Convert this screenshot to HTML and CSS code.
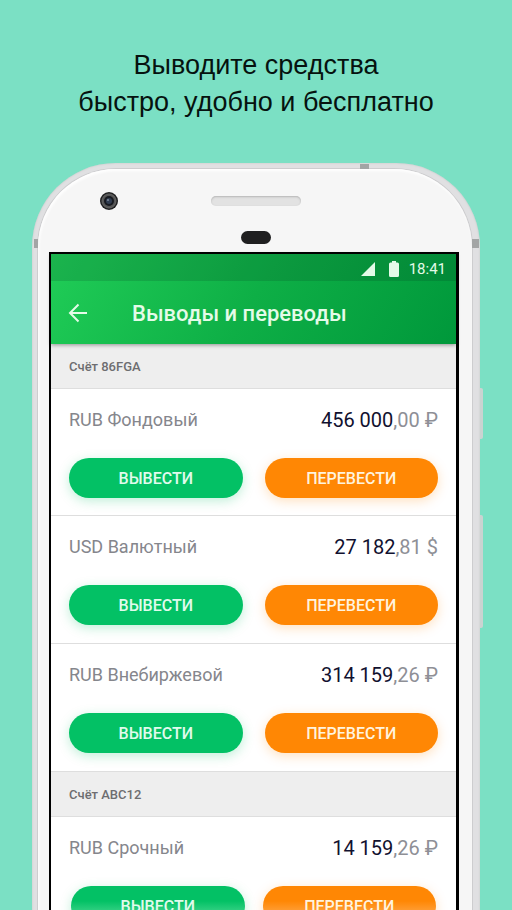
FILE: index.html
```
<!DOCTYPE html>
<html lang="ru">
<head>
	<meta charset="UTF-8">
	<meta name="viewport" content="width=device-width, initial-scale=1">
	<title>Выводы и переводы</title>
	<link rel="stylesheet" href="styles.css">
</head>
<body>
	<div class="page">
		<h1 class="slogan">Выводите средства<br>быстро, удобно и бесплатно</h1>
		<div class="phone">
			<span class="band band-top"></span>
			<span class="band band-left"></span>
			<span class="band band-right"></span>
			<span class="key key-power"></span>
			<span class="key key-volume"></span>
			<div class="front">
				<div class="hardware">
					<svg class="camera" width="20" height="20" viewBox="0 0 20 20" aria-hidden="true">
						<circle cx="10" cy="10" r="9" fill="#202122"/>
						<circle cx="10" cy="10" r="7" fill="#555" stroke="#666" stroke-width="1"/>
						<circle cx="10" cy="10" r="5" fill="#171a20"/>
						<circle cx="10" cy="10" r="3" fill="#303c50"/>
						<circle cx="9" cy="9" r="1" fill="#7d899a"/>
					</svg>
					<span class="speaker"></span>
					<span class="sensor"></span>
				</div>
				<div class="screen">
					<div class="top">
						<div class="status">
							<svg width="14" height="14" viewBox="0 0 14 14" aria-hidden="true"><path d="M14 0v14H0z" fill="#e4fbe8"/></svg>
							<svg width="10" height="16" viewBox="0 0 10 16" aria-hidden="true"><path d="M3 0h4v1.500h1.500A1.500 1.500 0 0 1 10 3v11.500a1.500 1.500 0 0 1-1.500 1.500h-7A1.500 1.500 0 0 1 0 14.500V3a1.500 1.500 0 0 1 1.500-1.500H3z" fill="#e4fbe8"/></svg>
							<span>18:41</span>
						</div>
						<header class="bar">
							<button class="back" type="button" aria-label="Назад">
								<svg width="20" height="20" viewBox="0 0 20 20" aria-hidden="true"><path d="M19 10H2M10.500 1.500L2 10l8.500 8.500" fill="none" stroke="#e4fbe8" stroke-width="2"/></svg>
							</button>
							<h2>Выводы и переводы</h2>
						</header>
					</div>
					<h3 class="account">Счёт 86FGA</h3>
					<section class="row">
						<div class="info"><span class="name">RUB Фондовый</span><span class="sum">456 000<small>,00 ₽</small></span></div>
						<div class="buttons"><button class="btn green" type="button">ВЫВЕСТИ</button><button class="btn orange" type="button">ПЕРЕВЕСТИ</button></div>
					</section>
					<section class="row">
						<div class="info"><span class="name">USD Валютный</span><span class="sum">27 182<small>,81 $</small></span></div>
						<div class="buttons"><button class="btn green" type="button">ВЫВЕСТИ</button><button class="btn orange" type="button">ПЕРЕВЕСТИ</button></div>
					</section>
					<section class="row">
						<div class="info"><span class="name">RUB Внебиржевой</span><span class="sum">314 159<small>,26 ₽</small></span></div>
						<div class="buttons"><button class="btn green" type="button">ВЫВЕСТИ</button><button class="btn orange" type="button">ПЕРЕВЕСТИ</button></div>
					</section>
					<h3 class="account">Счёт ABC12</h3>
					<section class="row row-last">
						<div class="info"><span class="name">RUB Срочный</span><span class="sum">14 159<small>,26 ₽</small></span></div>
						<div class="buttons"><button class="btn green" type="button">ВЫВЕСТИ</button><button class="btn orange" type="button">ПЕРЕВЕСТИ</button></div>
					</section>
				</div>
			</div>
		</div>
	</div>
</body>
</html>
```
FILE: styles.css
```
* {
	box-sizing: border-box;
}
body {
	margin: 0;
	background: #7be0c4;
	font-family: Roboto, "Liberation Sans", sans-serif;
}
h1, h2, h3 {
	margin: 0;
}
.page {
	height: 100vh;
	padding: 47px 32px 0;
	overflow: hidden;
}
.slogan {
	margin-bottom: 42px;
	font: 400 27px/37px "Liberation Sans", Arial, sans-serif;
	color: #06120f;
	text-align: center;
}

/* корпус телефона */
.phone {
	position: relative;
	padding: 6px 8px 0 6px;
	border-radius: 84px 84px 0 0;
	background: #e0e0e2;
	box-shadow: inset 0 0 2px #bfc4c3;
}
.front {
	padding: 0 13px 0 11px;
	border-radius: 78px 78px 0 0;
	background: #f6f6f6;
	box-shadow: 0 0 0 1px #cdcdcf, inset 1px 2px 3px #fff;
}
.band {
	position: absolute;
	background: #a3a5a5;
}
.band-top {
	top: 1px;
	right: 111px;
	width: 9px;
	height: 5px;
}
.band-left, .band-right {
	top: 76px;
	height: 9px;
}
.band-left {
	left: 2px;
	width: 4px;
}
.band-right {
	right: 1px;
	width: 7px;
}
.key {
	position: absolute;
	right: -3px;
	width: 3px;
	border-radius: 0 2px 2px 0;
	background: #cbd3d1;
}
.key-power {
	top: 225px;
	height: 51px;
}
.key-volume {
	top: 352px;
	height: 113px;
}
.hardware {
	display: grid;
	grid-template-columns: 1fr 90px 1fr;
	row-gap: 20px;
	align-items: center;
	height: 83px;
	padding: 22px 0 0 3px;
	align-content: start;
}
.camera {
	margin-left: 47px;
}
.speaker {
	height: 10px;
	border-radius: 5px;
	background: #e2e2e2;
	box-shadow: inset 0 1px 2px #b5b5b5;
}
.sensor {
	grid-column: 2;
	justify-self: center;
	width: 30px;
	height: 13px;
	border-radius: 7px;
	background: #1f1f20;
}

/* экран приложения */
.screen {
	border: solid #000;
	border-width: 2px 3px 0 2px;
	background: #fff;
}
.top {
	position: relative;
	background: linear-gradient(120deg, #20cd57, #0eaf46 50%, #00983b);
	box-shadow: 0 1px 4px rgba(0, 0, 0, .4);
	color: #e4fbe8;
}
.status {
	display: flex;
	justify-content: flex-end;
	align-items: center;
	gap: 14px;
	height: 27px;
	padding: 2px 10px 0 0;
	background: rgba(0, 30, 20, .14);
	font-size: 15px;
}
.status span {
	margin-left: -4px;
}
.bar {
	display: flex;
	align-items: center;
	gap: 44px;
	height: 63px;
	padding: 1px 17px 0;
}
.bar h2 {
	font-size: 22px;
	font-weight: 500;
	white-space: nowrap;
}
.back {
	display: flex;
	padding: 0;
	border: 0;
	background: none;
}
.account {
	padding: 1px 18px 0;
	border-bottom: 1px solid #dedede;
	background: #eee;
	font-size: 13px;
	font-weight: 500;
	line-height: 43px;
	color: #6d6d70;
}
.row {
	padding: 17px 18px;
	border-bottom: 1px solid #dedede;
}
.row + .row {
	padding-bottom: 18px;
}
.info {
	display: flex;
	justify-content: space-between;
	margin-bottom: 24px;
	line-height: 28px;
}
.name {
	font-size: 18px;
	color: #85868c;
}
.sum {
	font-size: 20px;
	color: #11112f;
}
.sum small {
	font-size: 20px;
	color: #8e8f96;
}
.buttons {
	display: flex;
	gap: 22px;
}
.btn {
	flex: 1;
	height: 40px;
	padding: 0;
	border: 0;
	border-radius: 20px;
	font: 500 16px Roboto, sans-serif;
}
.green {
	background: #03c165;
	box-shadow: 0 3px 12px rgba(3, 193, 101, .25);
	color: #e0fbed;
}
.orange {
	background: #ff8704;
	box-shadow: 0 3px 12px rgba(255, 135, 4, .25);
	color: #fff3df;
}
.row-last .buttons {
	gap: 18px;
	padding: 0 2px;
}
.row-last .green {
	background: linear-gradient(#03c165 15px, #35d184 26px);
}
.row-last .orange {
	background: linear-gradient(#ff8704 15px, #ff9f38 26px);
}
```
